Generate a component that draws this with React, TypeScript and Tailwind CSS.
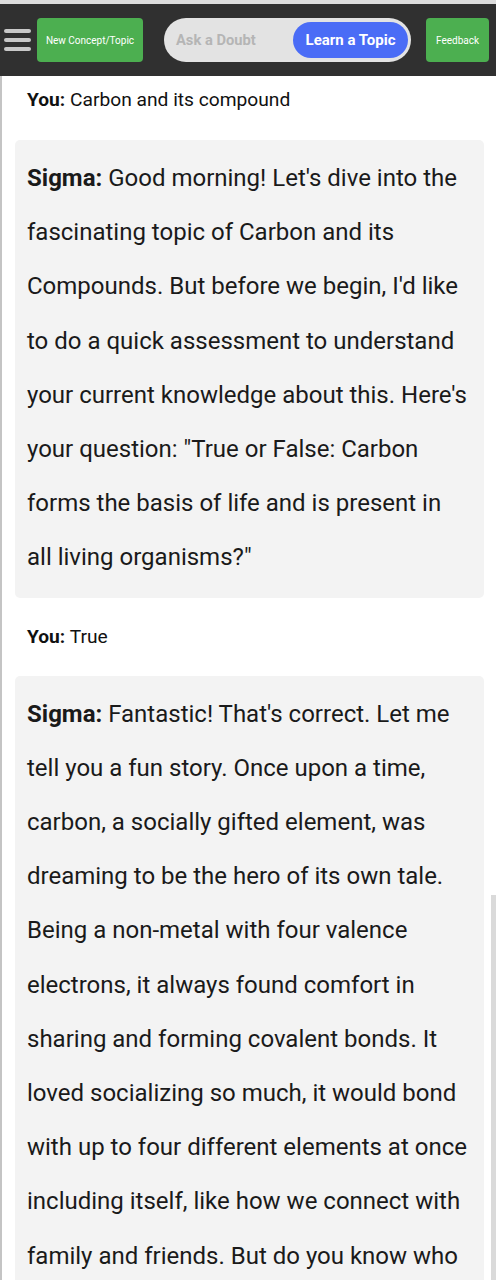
import React from 'react'

const font = { fontFamily: 'Roboto, "Noto Sans", sans-serif' }

interface Msg {
  who: 'You' | 'Sigma';
  text: string;
}

const messages: Msg[] = [
  { who: 'You', text: 'Carbon and its compound' },
  {
    who: 'Sigma',
    text: 'Good morning! Let\'s dive into the fascinating topic of Carbon and its Compounds. But before we begin, I\'d like to do a quick assessment to understand your current knowledge about this. Here\'s your question: "True or False: Carbon forms the basis of life and is present in all living organisms?"',
  },
  { who: 'You', text: 'True' },
  {
    who: 'Sigma',
    text: "Fantastic! That's correct. Let me tell you a fun story. Once upon a time, carbon, a socially gifted element, was dreaming to be the hero of its own tale. Being a non-metal with four valence electrons, it always found comfort in sharing and forming covalent bonds. It loved socializing so much, it would bond with up to four different elements at once including itself, like how we connect with family and friends. But do you know who else shares this trait of bonding?",
  },
]

function Header() {
  return (
    <div className="bg-[#dcdcdc] pt-[4px]">
      <div className="h-[72px] bg-[#303030] flex items-center pl-[4px] pr-[7px]">
        <div className="flex flex-col gap-[5px] w-[27px]">
          <span className="h-[4px] rounded-full bg-[#c8c8c8]" />
          <span className="h-[4px] rounded-full bg-[#c8c8c8]" />
          <span className="h-[4px] rounded-full bg-[#c8c8c8]" />
        </div>
        <button className="ml-[6px] w-[106px] h-[44px] rounded-[4px] bg-[#4caf50] text-white text-[10px] flex items-center justify-center">
          New Concept/Topic
        </button>
        <div className="ml-[21px] w-[247px] h-[44px] rounded-full bg-[#e3e3e3] flex items-center pl-[12px] pr-[3px]">
          <span className="text-[14.7px] font-bold text-[#b5b5b5] flex-1">Ask a Doubt</span>
          <span className="h-[36px] w-[115px] rounded-full bg-[#4a6cf6] text-white text-[15px] font-bold flex items-center justify-center">
            Learn a Topic
          </span>
        </div>
        <button className="ml-auto w-[63px] h-[44px] rounded-[4px] bg-[#4caf50] text-white text-[10px] flex items-center justify-center">
          Feedback
        </button>
      </div>
    </div>
  )
}

function App() {
  return (
    <div className="relative h-[1280px] bg-white overflow-hidden" style={font}>
      <Header />
      <div className="border-l-2 border-[#c4c4c4] min-h-[1204px] pl-[13px] pr-[12px]">
        {messages.map((m, i) =>
          m.who === 'You' ? (
            <p key={i} className={`${i === 0 ? 'pt-[10px] pb-[26px]' : 'pt-[25px] pb-[25px]'} px-[12px] text-[19.2px] leading-[28px] text-[#111]`}>
              <b>You:</b> {m.text}
            </p>
          ) : (
            <div key={i} className="bg-[#f3f3f3] rounded-[5px] pl-[12px] pr-[13px] pt-[11px] pb-[13px]">
              <p className="text-[24px] leading-[54.2px] text-[#1a1a1a]">
                <b>Sigma:</b> {m.text}
              </p>
            </div>
          )
        )}
      </div>
      <div className="absolute right-0 top-[895px] w-[5px] h-[400px] bg-[#dadada]" />
    </div>
  )
}

export default App
